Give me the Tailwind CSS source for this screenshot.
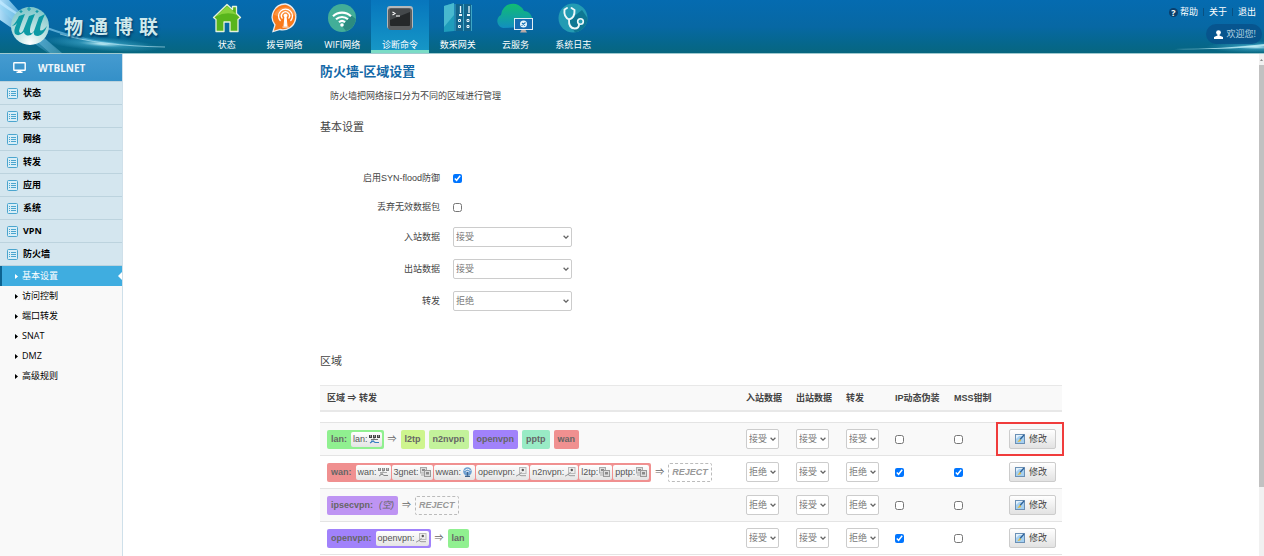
<!DOCTYPE html>
<html lang="zh-CN">
<head>
<meta charset="utf-8">
<title>WTBLNET</title>
<script src="https://cdn.jsdelivr.net/npm/@tailwindcss/browser@4"></script>
</head>
<body class="flex h-screen flex-col overflow-hidden bg-white text-[9px] leading-4 text-[#444] font-['Liberation_Sans','Noto_Sans_CJK_SC',sans-serif]">

<!-- shared icons -->
<svg class="hidden" aria-hidden="true">
  <symbol id="list" viewBox="0 0 11 11"><rect x=".5" y=".5" width="10" height="10" rx="1" fill="#d9eef7" stroke="#4ba5ce"/><path d="M2 3.500h1M2 5.500h1M2 7.500h1M4 3.500h5M4 5.500h5M4 7.500h5" stroke="#4ba5ce"/></symbol>
  <symbol id="tri" viewBox="0 0 3 5"><path d="M0 0l3 2.5L0 5z" fill="currentColor"/></symbol>
  <symbol id="chev" viewBox="0 0 6 4"><path d="M.6 .7L3 3.1 5.4 .7" fill="none" stroke="#666" stroke-width="1.3"/></symbol>
  <symbol id="edit" viewBox="0 0 10 10"><rect x=".5" y=".5" width="9" height="9" fill="#e3f1fb" stroke="#6b90b5"/><path d="M1 9V5l3-3h5v7z" fill="#a5d0f1"/><path d="M9 1L5 5.500" stroke="#2c5f97" stroke-width="1.3"/><path d="M5 4.800L2.300 8.300 6.200 7z" fill="#e5b93c"/></symbol>
  <symbol id="switch" viewBox="0 0 11 10"><path d="M0 1h3v3H0zM4 1h3v3H4zM8 1h3v3H8z" fill="#444"/><path d="M1 2h1M5 2h1M9 2h1" stroke="#ddd"/><path d="M2 5.5h7M5 4v2" stroke="#777"/><path d="M1 9l3-2 2 1.5h4M2 7h3" stroke="#3b7fc0" fill="none" stroke-width="1.2"/></symbol>
  <symbol id="switchoff" viewBox="0 0 11 10"><path d="M0 1h3v3H0zM4 1h3v3H4zM8 1h3v3H8z" fill="#888"/><path d="M1 2h1M5 2h1M9 2h1" stroke="#eee"/><path d="M2 5.5h7M5 4v2" stroke="#aaa"/><path d="M1 9l3-2 2 1.5h4M2 7h3" stroke="#888" fill="none"/></symbol>
  <symbol id="modem" viewBox="0 0 11 10"><rect x=".5" y=".5" width="6" height="5.500" fill="#ddd" stroke="#aaa"/><path d="M2 2h3v2H2z" fill="#888"/><rect x="4.5" y="3.5" width="6" height="6" fill="#ddd" stroke="#999"/><path d="M6 5h3v2.500H6z" fill="#8a8a8a"/><path d="M1 8h3" stroke="#aaa"/></symbol>
  <symbol id="wifi" viewBox="0 0 11 10"><circle cx="5.5" cy="4.5" r="4.3" fill="#6d9fd0"/><path d="M2.5 4a3.4 3.4 0 0 1 6 0M3.8 5.4a2 2 0 0 1 3.4 0" stroke="#fff" fill="none" stroke-width=".9"/><path d="M5.5 5v3.5M3 9.3h5" stroke="#3f648b" stroke-width="1.2"/></symbol>
  <symbol id="tunnel" viewBox="0 0 11 10"><rect x="3.5" y=".5" width="6.5" height="6" fill="#eee" stroke="#bbb"/><circle cx="6.8" cy="3" r="1.2" fill="#555"/><path d="M5.500 5L3 8M0 9.200l3-1.700 2 1.200h5" stroke="#999" fill="none"/></symbol>
</svg>

<header class="relative flex h-[54px] shrink-0 border-b border-[#9fc9cf] bg-linear-to-b from-[#056bb0] via-[#0768a4] to-[#07667f] text-white font-['Open_Sans','Noto_Sans_CJK_SC',sans-serif]">
  <svg class="absolute top-0 left-0 h-[53px] w-[198px]" viewBox="0 0 198 53" aria-hidden="true">
    <defs>
      <linearGradient id="beam" x1="0" x2="1"><stop offset="0" stop-color="#bfe8ff" stop-opacity=".9"/><stop offset=".5" stop-color="#6fc6ee" stop-opacity=".5"/><stop offset="1" stop-color="#6fc6ee" stop-opacity="0"/></linearGradient>
      <radialGradient id="glow"><stop offset="0" stop-color="#d9fbff" stop-opacity=".95"/><stop offset=".4" stop-color="#5cc6e6" stop-opacity=".4"/><stop offset="1" stop-color="#5cc6e6" stop-opacity="0"/></radialGradient>
      <radialGradient id="ball" cx=".5" cy=".95" r=".9"><stop offset="0" stop-color="#fff"/><stop offset=".3" stop-color="#d0ebea"/><stop offset="1" stop-color="#83c8cb"/></radialGradient>
    </defs>
    <path d="M0 0h9L34 28 60 53H48L0 20z" fill="url(#beam)"/>
    <path d="M0 0L62 53H50L0 9z" fill="#8fd6f5" opacity=".35"/>
    <path d="M0 0Q50 43 165 47Q60 48 0 4z" fill="url(#beam)"/>
    <ellipse cx="102" cy="44" rx="58" ry="7" fill="url(#glow)" transform="rotate(4 102 44)"/>
    <path d="M60 34Q100 46 165 47" stroke="#cdf3fb" stroke-width=".8" fill="none" opacity=".7"/>
    <circle cx="30" cy="26" r="19" fill="url(#ball)"/>
    <path d="M12 26Q16 23 19 16L25 14Q20 26 19 31Q20 35 23 31L29 16L35 14Q29 28 30 32Q31 35 34 31L39 17L45 14Q40 25 40 30Q42 32 47 26Q44 35 38 36Q33 36 34 32Q30 37 26 35Q24 34 24 32Q19 37 15 34Q13 31 17 23Q15 26 12 26z" fill="#0d9aa4"/>
    <path d="M29 7v4M27 9h4M21 10v3M19.500 11.500h3M37 10v3M35.500 11.500h3" stroke="#159aa8" stroke-width="1.200"/>
  </svg>
  <div class="relative flex w-[198px] shrink-0 items-center gap-1.5 pl-16 text-[19px] font-bold text-[#cfe9ed] [text-shadow:1px_2px_2px_#033c66]"><span>物</span><span>通</span><span>博</span><span>联</span></div>

  <nav class="relative grid w-[404px] shrink-0 grid-cols-7 text-center">
    <a href="#" class="flex flex-col items-center gap-1 pt-[3px]">
      <svg class="h-[30px] w-[30px]" viewBox="0 0 30 30"><path d="M15 1.500L1.500 14.500 4 16.500V28.500H12V19H18V28.500H26V16.500L28.500 14.500 24.500 10.500V3.500H20.500V6.500z" fill="#58b51c" stroke="#e5f2dc" stroke-width="1.300" stroke-linejoin="round"/><path d="M15 3L4 13.500Q14 8 25.500 12z" fill="#9ade4a" opacity=".7"/></svg><span>状态</span></a>
    <a href="#" class="flex flex-col items-center gap-1 pt-[3px]">
      <svg class="h-[30px] w-[30px]" viewBox="0 0 30 30"><path d="M15.500 1A13 13 0 1 1 10 26.500L3 28.500 5 22A13 13 0 0 1 15.500 1z" fill="#f97a1b" stroke="#e9edf0" stroke-width="1.300"/><path d="M4 12A12 11 0 0 1 27 12Q15 16 4 12z" fill="#ffac65" opacity=".5"/><path d="M10.500 18a7 7 0 1 1 10 0M12.500 15.500a4 4 0 1 1 6 0" fill="none" stroke="#fff" stroke-width="1.300"/><circle cx="15.500" cy="12.500" r="1.800" fill="#fff"/><path d="M15 13h1l1 10h-3zM12.500 24h6" fill="#fff" stroke="#fff"/></svg><span>拨号网络</span></a>
    <a href="#" class="flex flex-col items-center gap-1 pt-[3px]">
      <svg class="h-[30px] w-[30px]" viewBox="0 0 30 30"><circle cx="15" cy="15" r="14" fill="#42ae98"/><path d="M15 23L24 12 28.900 16A14 14 0 0 1 19 28z" fill="#2c8b80"/><path d="M6 13.200a13 13 0 0 1 18 0M9 16.300a9 9 0 0 1 12 0M12 19.200a4.500 4.500 0 0 1 6 0" fill="none" stroke="#fff" stroke-width="2.200"/><circle cx="15" cy="22" r="1.800" fill="#fff"/></svg><span>WIFI网络</span></a>
    <a href="#" aria-current="page" class="flex flex-col items-center gap-1 bg-linear-to-b from-[#0876bd] to-[#1798c7] pt-[3px] shadow-[inset_0_-3px_#7bdcc6]">
      <svg class="h-[30px] w-[30px]" viewBox="0 0 30 30"><rect x="2" y="3" width="26" height="23" rx="3" fill="#b4b8ba"/><rect x="3" y="5" width="24" height="22" rx="3" fill="#5b5e60"/><rect x="5" y="6" width="20" height="17" rx="1" fill="#25282a"/><path d="M5 6h20v3L5 17z" fill="#44484b"/><path d="M7.500 9l2.500 1.500-2.500 1.500M11 13h4" stroke="#fff" fill="none" stroke-width="1.100"/></svg><span>诊断命令</span></a>
    <a href="#" class="flex flex-col items-center gap-1 pt-[3px]">
      <svg class="h-[30px] w-[30px]" viewBox="0 0 30 30"><path d="M1 3L11 0V28L1 29z" fill="#1f9dbb"/><path d="M1 3L11 0V12L1 24z" fill="#48b9cf"/><path d="M12 1h8v27h-8zM21 1h7v27h-7z" fill="#13658c"/><path d="M12 1v27M20.500 1v27M28.500 2v26" stroke="#3da6c6"/><path d="M17.500 3v7M26 3v7" stroke="#e9f6fa" stroke-width="1.300"/><path d="M16 12h3M24 12h3" stroke="#e9f6fa" stroke-width="2"/><path d="M15.500 16.500h2v2h-2zM15.500 22.500h2v2h-2zM24 16.500h2v2h-2zM24 22.500h2v2h-2z" fill="none" stroke="#e9f6fa"/></svg><span>数采网关</span></a>
    <a href="#" class="flex flex-col items-center gap-1 pt-[3px]">
      <svg class="h-[30px] w-[38px]" viewBox="0 0 38 30"><defs><linearGradient id="cloud" x2="0" y2="1"><stop stop-color="#10bd72"/><stop offset="1" stop-color="#128fc0"/></linearGradient></defs><path d="M7 25A7 7 0 0 1 5 12A12 12 0 0 1 28 8A9 9 0 0 1 33 24z" fill="url(#cloud)"/><rect x="18.500" y="15.500" width="18" height="11" fill="#176db3" stroke="#e4eef3"/><circle cx="27.500" cy="21" r="3.500" fill="#e8f6fc"/><path d="M25.500 22.500l4-3M26 20l3 2.500" stroke="#1673b9" stroke-width="1.200"/><path d="M25.500 27h4l1.500 2.500h-7z" fill="#b9aaa7"/></svg><span>云服务</span></a>
    <a href="#" class="flex flex-col items-center gap-1 pt-[3px]">
      <svg class="h-[30px] w-[30px]" viewBox="0 0 30 30"><circle cx="15" cy="15" r="14.500" fill="#239bb3"/><path d="M10 18L24 7 29.500 15A14.500 14.500 0 0 1 17 29.400z" fill="#0e7793"/><path d="M9 5L6.500 6.500Q5.500 14 11 16.500Q17 15 16.500 7L13.500 5M11 16.500Q10.500 25 16.500 25.500Q21.500 25.500 21 20.500" fill="none" stroke="#eef8fa" stroke-width="1.900" stroke-linecap="round"/><circle cx="22.500" cy="18.500" r="2.800" fill="#259cb3" stroke="#eef8fa" stroke-width="1.600"/></svg><span>系统日志</span></a>
  </nav>

  <div class="relative ml-auto flex flex-col items-end overflow-hidden pl-6 whitespace-nowrap">
    <svg class="absolute right-0 bottom-0 h-3 w-[90px]" viewBox="0 0 90 12" preserveAspectRatio="none" aria-hidden="true"><ellipse cx="82" cy="6" rx="50" ry="6" fill="url(#glow)"/><path d="M0 8Q50 8 90 3V5Q50 9 0 8z" fill="#c3f2fa" opacity=".8"/></svg>
    <div class="relative flex items-center gap-[5px] pt-1 pr-2">
      <a href="#" class="flex items-center gap-0.5"><span class="flex size-[9px] items-center justify-center rounded-full bg-[#0b3f6c] leading-[9px] font-bold">?</span>帮助</a>
      <span class="h-2 w-px bg-[#0a5080]"></span><a href="#">关于</a>
      <span class="h-2 w-px bg-[#0a5080]"></span><a href="#">退出</a>
    </div>
    <div class="relative mt-1 mr-0.5 flex h-5 w-14 items-center justify-end gap-1 rounded-full bg-[#07508a]/80 pr-1.5 text-[#b5d4e2]">
      <svg class="h-[9px] w-[9px] shrink-0" viewBox="0 0 9 9"><circle cx="4.500" cy="2.600" r="2.400" fill="#fff"/><path d="M3.500 4h2v1.500L9 7v2H0V7l3.500-1.500z" fill="#fff"/></svg><span>欢迎您!</span>
    </div>
  </div>
</header>

<div class="flex min-h-0 flex-1">
  <aside class="w-[123px] shrink-0 border-r border-[#cfe0ea] bg-[#f9f9f9] text-black font-['Open_Sans','Noto_Sans_CJK_SC',sans-serif]">
    <div class="flex h-7 items-center gap-3 border-b border-[#bcd3de] bg-linear-to-b from-[#459bd0] to-[#3490c8] pl-[13px] text-[10px] font-bold text-[#eef6fb]">
      <svg class="h-[11px] w-[13px]" viewBox="0 0 13 11"><rect x=".8" y=".8" width="11.400" height="7.400" rx=".5" fill="none" stroke="#fff" stroke-width="1.400"/><path d="M5 8h3v1.500h1.500V11h-6V9.500H5z" fill="#fff"/></svg>WTBLNET
    </div>
    <ul class="font-bold [&_a]:flex [&_a]:h-[23px] [&_a]:items-center [&_a]:gap-[5px] [&_a]:border-b [&_a]:border-[#bcd3de] [&_a]:bg-[#d4e6ef] [&_a]:pl-[7px] [&_svg]:size-[11px]">
      <li><a href="#"><svg><use href="#list"/></svg>状态</a></li>
      <li><a href="#"><svg><use href="#list"/></svg>数采</a></li>
      <li><a href="#"><svg><use href="#list"/></svg>网络</a></li>
      <li><a href="#"><svg><use href="#list"/></svg>转发</a></li>
      <li><a href="#"><svg><use href="#list"/></svg>应用</a></li>
      <li><a href="#"><svg><use href="#list"/></svg>系统</a></li>
      <li><a href="#"><svg><use href="#list"/></svg>VPN</a></li>
      <li><a href="#"><svg><use href="#list"/></svg>防火墙</a></li>
    </ul>
    <ul class="[&_a]:flex [&_a]:h-5 [&_a]:items-center [&_a]:gap-1 [&_a]:pl-[15px]">
      <li class="relative border-l-2 border-[#0d6390] bg-[#3fade0] text-white"><a href="#" aria-current="page" class="-ml-0.5"><svg class="h-[5px] w-[3px]"><use href="#tri"/></svg>基本设置</a><svg class="absolute top-1.5 right-0 h-2 w-1" viewBox="0 0 4 8"><path d="M4 0L0 4l4 4z" fill="#fff"/></svg></li>
      <li><a href="#"><svg class="h-[5px] w-[3px]"><use href="#tri"/></svg>访问控制</a></li>
      <li><a href="#"><svg class="h-[5px] w-[3px]"><use href="#tri"/></svg>端口转发</a></li>
      <li><a href="#"><svg class="h-[5px] w-[3px]"><use href="#tri"/></svg>SNAT</a></li>
      <li><a href="#"><svg class="h-[5px] w-[3px]"><use href="#tri"/></svg>DMZ</a></li>
      <li><a href="#"><svg class="h-[5px] w-[3px]"><use href="#tri"/></svg>高级规则</a></li>
    </ul>
  </aside>

  <main class="min-w-0 flex-1 overflow-hidden">
    <div class="mx-auto w-full max-w-[742px] pt-2">
      <h1 class="text-[13px] leading-5 font-bold text-[#1369a8]">防火墙-区域设置</h1>
      <p class="mt-1.5 pl-2.5">防火墙把网络接口分为不同的区域进行管理</p>
      <h2 class="mt-[13px] text-[11px] leading-5">基本设置</h2>
      <form class="mt-[26px]">
        <div class="flex h-[30px] items-center gap-[13px]"><label for="syn" class="w-[120px] text-right">启用SYN-flood防御</label><input id="syn" type="checkbox" checked class="size-[9px] accent-[#0075ff]"></div>
        <div class="flex h-7 items-center gap-[13px]"><label for="drop" class="w-[120px] text-right">丢弃无效数据包</label><input id="drop" type="checkbox" class="size-[9px] accent-[#0075ff]"></div>
        <div class="flex h-8 items-center gap-[13px]"><label for="in" class="w-[120px] text-right">入站数据</label><span class="grid w-[119px] items-center"><select id="in" class="col-start-1 row-start-1 h-5 appearance-none rounded-xs border border-[#ccc] bg-white pl-0.5 text-[#777]"><option>接受</option><option>拒绝</option></select><svg class="pointer-events-none col-start-1 row-start-1 mr-[3px] h-1 w-1.5 justify-self-end"><use href="#chev"/></svg></span></div>
        <div class="flex h-8 items-center gap-[13px]"><label for="out" class="w-[120px] text-right">出站数据</label><span class="grid w-[119px] items-center"><select id="out" class="col-start-1 row-start-1 h-5 appearance-none rounded-xs border border-[#ccc] bg-white pl-0.5 text-[#777]"><option>接受</option><option>拒绝</option></select><svg class="pointer-events-none col-start-1 row-start-1 mr-[3px] h-1 w-1.5 justify-self-end"><use href="#chev"/></svg></span></div>
        <div class="flex h-8 items-center gap-[13px]"><label for="fwd" class="w-[120px] text-right">转发</label><span class="grid w-[119px] items-center"><select id="fwd" class="col-start-1 row-start-1 h-5 appearance-none rounded-xs border border-[#ccc] bg-white pl-0.5 text-[#777]"><option>拒绝</option><option>接受</option></select><svg class="pointer-events-none col-start-1 row-start-1 mr-[3px] h-1 w-1.5 justify-self-end"><use href="#chev"/></svg></span></div>
      </form>
      <h2 class="mt-[34px] text-[11px] leading-5">区域</h2>
      <table class="mt-3.5 w-full table-fixed border-collapse text-left">
        <colgroup><col><col class="w-[50px]"><col class="w-[50px]"><col class="w-[49px]"><col class="w-[59px]"><col class="w-[55px]"><col class="w-[60px]"></colgroup>
        <thead>
          <tr class="h-[25px] border-t border-b-2 border-[#e8e8e8] bg-[#f9f9f9] whitespace-nowrap [&>th]:pl-[7px]"><th>区域 ⇒ 转发</th><th>入站数据</th><th>出站数据</th><th>转发</th><th>IP动态伪装</th><th>MSS钳制</th><th></th></tr>
          <tr class="h-3"><td colspan="7"></td></tr>
        </thead>
        <tbody id="zones"></tbody>
      </table>
    </div>
  </main>
  <div class="flex w-[5px] shrink-0 flex-col bg-[#f1f1f1]" aria-hidden="true"><div class="grid h-[11px] place-items-center text-[#888]"><svg class="h-[2px] w-[3px]" viewBox="0 0 3 2"><path d="M0 2L1.500 0 3 2z" fill="currentColor"/></svg></div><div class="h-[84%] bg-[#c1c1c1]"></div></div>
</div>

<script>
  const colors = { lan:'#90f090', l2tp:'#cef58e', n2nvpn:'#c3f29b', openvpn:'#a182fb', pptp:'#99ebc5', wan:'#f09090', ipsecvpn:'#be94f3' };
  const zones = [
    { name:'lan', nets:[['lan','switch']], to:['l2tp','n2nvpn','openvpn','pptp','wan'], policy:['接受','接受','接受'], masq:false, mss:false, marked:true },
    { name:'wan', nets:[['wan','switchoff'],['3gnet','modem'],['wwan','wifi'],['openvpn','tunnel'],['n2nvpn','tunnel'],['l2tp','modem'],['pptp','modem']], to:[], policy:['拒绝','接受','拒绝'], masq:true, mss:true },
    { name:'ipsecvpn', nets:[], to:[], policy:['拒绝','接受','拒绝'], masq:false, mss:false },
    { name:'openvpn', nets:[['openvpn','tunnel']], to:['lan'], policy:['接受','接受','拒绝'], masq:true, mss:false }
  ];
  const titles = ['入站数据','出站数据','转发'];
  const net = ([n, icon]) => `<span class="flex h-[15px] items-center gap-px rounded-xs bg-linear-to-b from-white to-[#e4e4e4] px-0.5 font-normal text-[#555]">${n}: <svg class="h-2.5 w-[11px]"><use href="#${icon}"/></svg></span>`;
  const select = (z, v, i) => `<td><span class="grid w-[33px] items-center"><select aria-label="${z.name} ${titles[i]}" class="col-start-1 row-start-1 h-5 appearance-none rounded-xs border border-[#ccc] bg-white pl-0.5 text-[#777]"><option>${v}</option><option>${v === '接受' ? '拒绝' : '接受'}</option></select><svg class="pointer-events-none col-start-1 row-start-1 mr-[3px] h-1 w-1.5 justify-self-end"><use href="#chev"/></svg></span></td>`;
  const check = (z, on, label) => `<td><input type="checkbox" aria-label="${z.name} ${label}" ${on ? 'checked' : ''} class="block size-[9px] accent-[#0075ff]"></td>`;
  document.getElementById('zones').innerHTML = zones.map(z => `
    <tr class="border-y border-[#e4e4e4] odd:bg-[#f9f9f9] [&>td]:h-[33px] [&>td]:pl-[7px]">
      <td><div class="flex items-center gap-1 font-bold whitespace-nowrap text-[#666]">
        <span class="flex h-[19px] items-center rounded-xs pr-0.5 pl-1" style="background:${colors[z.name]}">${z.name}:<span class="ml-1 flex gap-px">${z.nets.length ? z.nets.map(net).join('') : '<em class="px-0.5 font-normal">(空)</em>'}</span></span>
        <span class="font-normal">⇒</span>
        ${z.to.length ? z.to.map(t => `<span class="flex h-[19px] items-center rounded-xs px-1" style="background:${colors[t]}">${t}</span>`).join('') : '<em class="flex h-[19px] items-center rounded-xs border border-dashed border-[#bbb] px-[3px] text-[#999]">REJECT</em>'}
      </div></td>
      ${z.policy.map((v, i) => select(z, v, i)).join('')}
      ${check(z, z.masq, 'IP动态伪装')}${check(z, z.mss, 'MSS钳制')}
      <td class="relative"><button type="button" class="flex h-5 w-[47px] items-center gap-1 rounded-xs border border-[#ccc] bg-linear-to-b from-white to-[#e2e2e2] pl-[5px] whitespace-nowrap"><svg class="size-2.5 shrink-0"><use href="#edit"/></svg>修改</button>${z.marked ? '<span class="pointer-events-none absolute -top-px -right-0.5 -bottom-px -left-1.5 border-2 border-[#f03c3c]"></span>' : ''}</td>
    </tr>`).join('');
</script>
</body>
</html>
